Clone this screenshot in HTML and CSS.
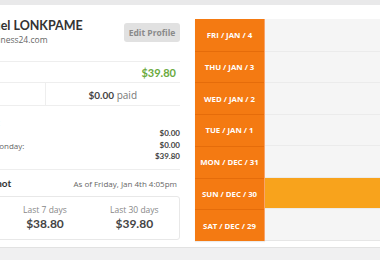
FILE: index.html
```html
<!DOCTYPE html>
<html lang="en">
<head>
  <meta charset="UTF-8" />
  <title>Sales Dashboard</title>
  <link rel="stylesheet" href="styles.css">
</head>
<body>
  <div class="topbar"></div>
  <div class="main">
    <div class="account">
      <div class="profile">
        <div class="who">
          <div class="name">Samuel LONKPAME</div>
          <div class="email">sj@business24.com</div>
        </div>
        <button class="edit-btn">Edit Profile</button>
      </div>

      <div class="balance">$39.80</div>

      <div class="paid-row">
        <div class="half"><b>$0.00</b></div>
        <div class="half"><b>$0.00</b>&nbsp;paid</div>
      </div>

      <div class="summary">
        <div class="summary-title">Payouts:</div>
        <div class="summary-line"><span>Pending:</span><b>$0.00</b></div>
        <div class="summary-line"><span>Paid on Monday:</span><b>$0.00</b></div>
        <div class="summary-line"><span>Total:</span><b>$39.80</b></div>
      </div>

      <div class="snap-head">
        <span class="snap-title">Snapshot</span>
        <span class="snap-date">As of Friday, Jan 4th 4:05pm</span>
      </div>

      <div class="stats">
        <div class="stat"><span class="stat-label">Today</span><span class="stat-value">$0.00</span></div>
        <div class="stat"><span class="stat-label">Last 7 days</span><span class="stat-value">$38.80</span></div>
        <div class="stat"><span class="stat-label">Last 30 days</span><span class="stat-value">$39.80</span></div>
      </div>
    </div>

    <div class="days">
      <div class="day">FRI / JAN / 4</div>
      <div class="day">THU / JAN / 3</div>
      <div class="day">WED / JAN / 2</div>
      <div class="day">TUE / JAN / 1</div>
      <div class="day">MON / DEC / 31</div>
      <div class="day">SUN / DEC / 30</div>
      <div class="day">SAT / DEC / 29</div>
    </div>

    <div class="chart">
      <div class="bar-row"></div>
      <div class="bar-row"></div>
      <div class="bar-row"></div>
      <div class="bar-row"></div>
      <div class="bar-row"></div>
      <div class="bar-row"><div class="bar" style="width: 100%"></div></div>
      <div class="bar-row"></div>
    </div>
  </div>
</body>
</html>
```

FILE: styles.css
```css
* {
  box-sizing: border-box;
  margin: 0;
  padding: 0;
}

body {
  font-family: 'Open Sans', sans-serif;
  background: #f0f0f1;
  color: #555;
  overflow: hidden;
}

.topbar {
  height: 5px;
  background: #e9e9ea;
}

.main {
  display: flex;
  background: #fff;
  height: 243px;
  border-bottom: 1px solid #e2e2e2;
}

/* left column, scrolled partly out of view */
.account {
  flex: none;
  width: 270px;
  margin-left: -90px;
}

.profile {
  height: 57px;
  display: flex;
  align-items: center;
  justify-content: space-between;
  border-bottom: 1px solid #eee;
  padding: 0 0 2px 60px;
}

.name {
  font-family: 'Lato', sans-serif;
  font-weight: 700;
  font-size: 12.5px;
  color: #333;
  line-height: 16px;
}

.email {
  font-size: 8.5px;
  color: #666;
  line-height: 12px;
}

.edit-btn {
  font-family: 'Open Sans', sans-serif;
  font-size: 8.5px;
  font-weight: 700;
  color: #8a8a8a;
  background: #e1e1e1;
  border: none;
  border-radius: 3px;
  width: 56px;
  height: 19px;
}

.balance {
  height: 21px;
  border-bottom: 1px solid #eee;
  text-align: right;
  padding-right: 4px;
  font-family: 'Lato', sans-serif;
  font-weight: 700;
  font-size: 11px;
  color: #6aaa40;
  line-height: 21px;
}

.paid-row {
  display: flex;
  height: 23px;
  border-bottom: 1px solid #eee;
}

.half {
  flex: 1;
  display: flex;
  align-items: center;
  justify-content: center;
  font-size: 10px;
  color: #777;
  padding-top: 2px;
}

.half:first-child {
  border-right: 1px solid #eee;
}

.half b {
  font-family: 'Lato', sans-serif;
  color: #444;
}

.summary {
  height: 64px;
  border-bottom: 1px solid #eee;
  padding: 10px 0 0 52px;
}

.summary-title {
  font-family: 'Lato', sans-serif;
  font-weight: 700;
  font-size: 10px;
  color: #333;
  line-height: 12px;
}

.summary-line {
  display: flex;
  justify-content: space-between;
  font-size: 8px;
  line-height: 11.5px;
  color: #666;
}

.summary-line b {
  font-family: 'Lato', sans-serif;
  color: #444;
}

.snap-head {
  display: flex;
  justify-content: space-between;
  align-items: center;
  height: 26px;
  padding: 0 3px 0 60px;
}

.snap-title {
  font-family: 'Lato', sans-serif;
  font-weight: 700;
  font-size: 10px;
  color: #333;
}

.snap-date {
  font-size: 8px;
  color: #666;
}

.stats {
  display: flex;
  height: 44px;
  border: 1px solid #e8e8e8;
  border-radius: 3px;
}

.stat {
  flex: 1;
  display: flex;
  flex-direction: column;
  align-items: center;
  justify-content: center;
  padding-bottom: 2px;
}

.stat-label {
  font-size: 8.5px;
  color: #888;
  line-height: 12px;
}

.stat-value {
  font-family: 'Lato', sans-serif;
  font-weight: 700;
  font-size: 12px;
  color: #444;
  line-height: 15px;
}

/* day list */
.days {
  flex: none;
  width: 70px;
  height: 222px;
  margin: 14px 0 0 15px;
  display: grid;
  grid-template-rows: repeat(7, 1fr);
  background: #f47a12;
  border-right: 1px solid #f8a36a;
  box-shadow: 0 1px 1px rgba(0, 0, 0, 0.08);
}

.day {
  display: flex;
  align-items: center;
  justify-content: center;
  color: #fff;
  font-family: 'Open Sans', sans-serif;
  font-weight: 700;
  font-size: 7.8px;
  border-top: 1px solid #e56c0a;
}

.day:first-child {
  border-top: none;
}

/* chart */
.chart {
  flex: 1;
  height: 222px;
  margin-top: 14px;
  display: grid;
  grid-template-rows: repeat(7, 1fr);
  background: #f5f5f5;
  border-bottom: 1px solid #e6e6e6;
}

.bar-row {
  border-top: 1px solid #ebebeb;
}

.bar-row:first-child {
  border-top: none;
}

.bar {
  height: 100%;
  background: #f8a31c;
}
```
